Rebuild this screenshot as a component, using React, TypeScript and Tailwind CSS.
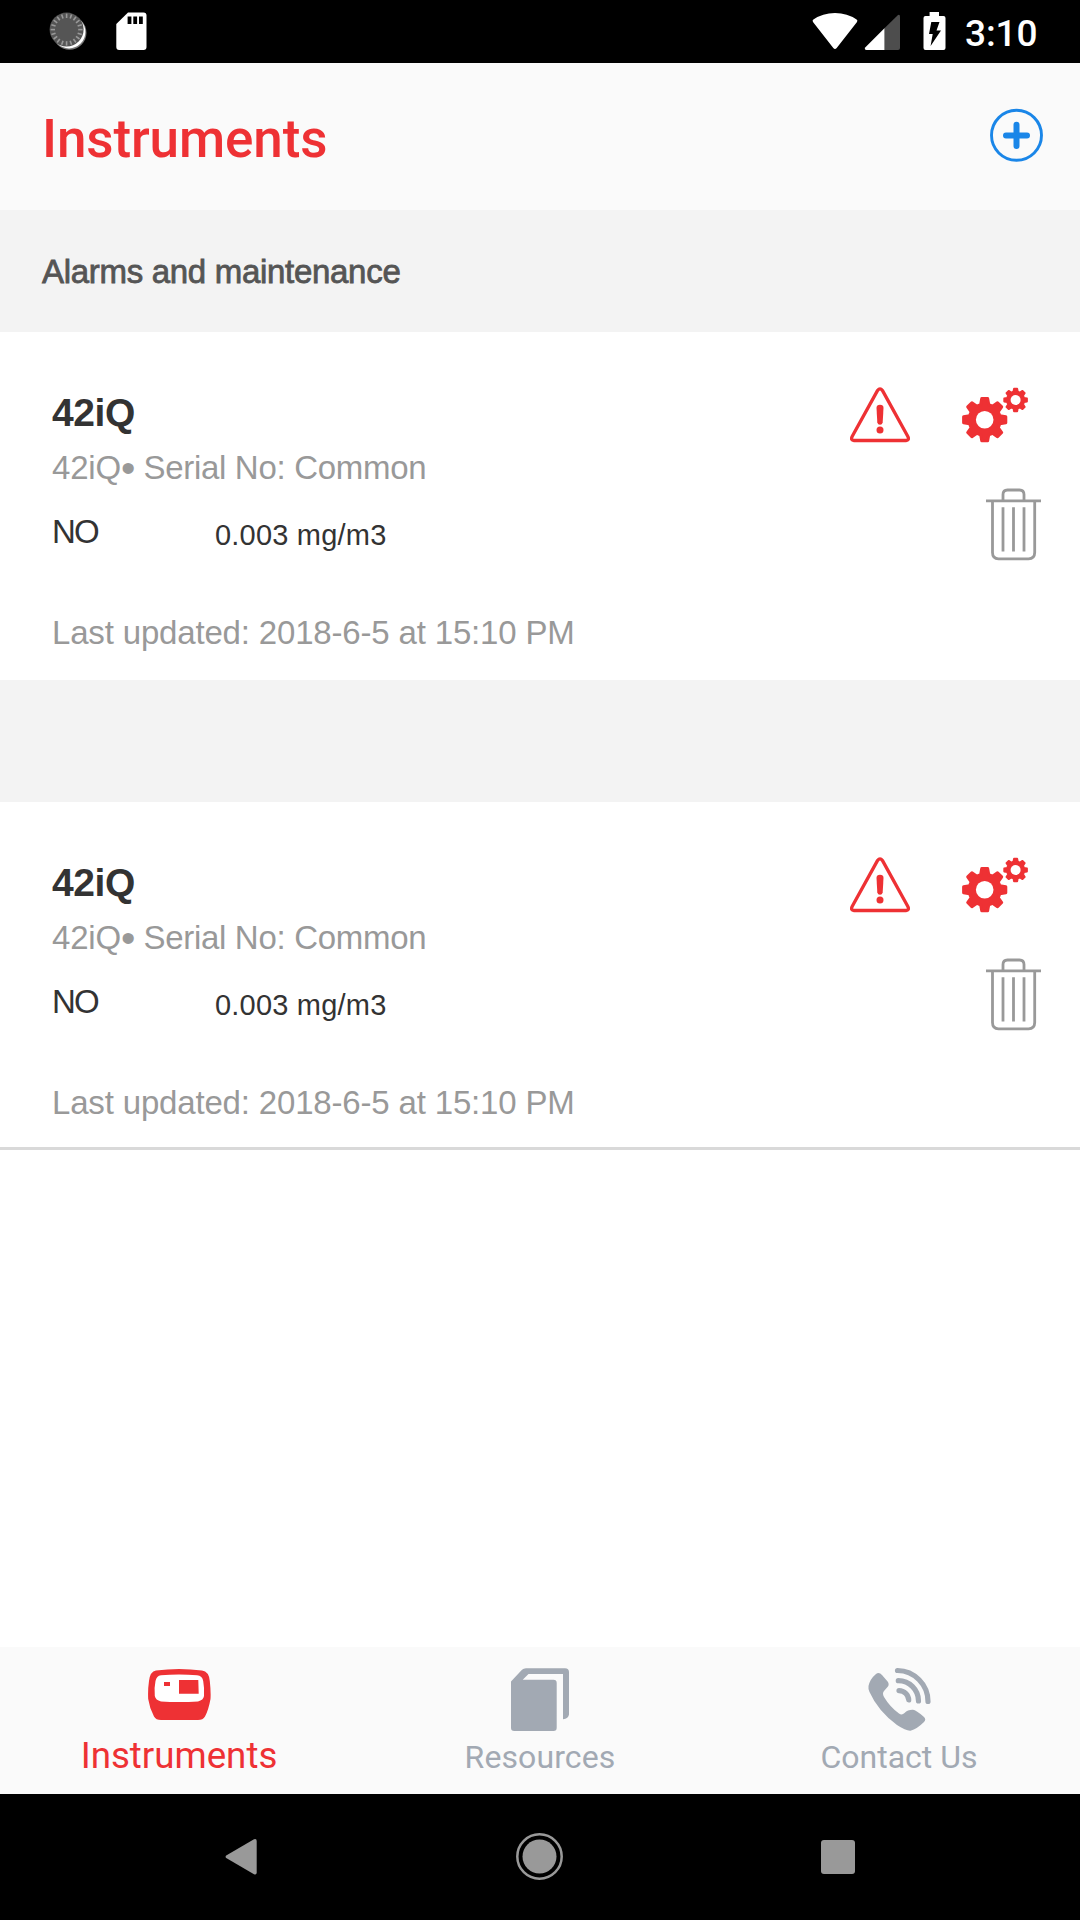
import React from "react";

function gearPath(cx: number, cy: number, outer: number, valley: number) {
  const pt = (r: number, deg: number) => {
    const a = (deg * Math.PI) / 180;
    return (cx + r * Math.cos(a)).toFixed(2) + " " + (cy + r * Math.sin(a)).toFixed(2);
  };
  let d = "";
  for (let k = 0; k < 8; k++) {
    const c = k * 45;
    d += (k === 0 ? "M" : "L") + pt(valley, c - 15) + "L" + pt(outer, c - 8);
    d += "L" + pt(outer, c + 8) + "L" + pt(valley, c + 15);
    d += "A" + valley + " " + valley + " 0 0 1 " + pt(valley, c + 30);
  }
  return d + "Z";
}

function WarningIcon() {
  return (
    <svg width="60" height="56" viewBox="0 0 60 56" fill="none">
      <path d="M27.6 3.4 Q30 .2 32.4 3.4 L58 49.8 Q59.4 53.2 56 53.5 H4 Q.6 53.2 2 49.8 Z" stroke="#ee3134" strokeWidth="3.3" strokeLinejoin="round" />
      <path d="M26.5 21 Q26.5 17.8 30 17.8 Q33.5 17.8 33.5 21 L32.7 35.5 Q32.2 37.8 30 37.8 Q27.8 37.8 27.3 35.5 Z" fill="#ee3134" />
      <circle cx="30" cy="43" r="3.5" fill="#ee3134" />
    </svg>
  );
}

function GearsIcon() {
  return (
    <svg width="68" height="56" viewBox="0 0 68 56">
      <path d={gearPath(23.7, 32.7, 21.3, 15.6)} fill="#ee3134" stroke="#ee3134" strokeWidth="3" strokeLinejoin="round" />
      <path d={gearPath(54.6, 13, 11.5, 8.6)} fill="#ee3134" stroke="#ee3134" strokeWidth="1.8" strokeLinejoin="round" />
      <circle cx="23.7" cy="32.7" r="8.8" fill="#fff" />
      <circle cx="54.6" cy="13" r="5" fill="#fff" />
    </svg>
  );
}

function TrashIcon() {
  return (
    <svg width="58" height="74" viewBox="0 0 58 74" fill="none" stroke="#999" strokeWidth="2.8">
      <path d="M1 12.8 H56" />
      <path d="M18 12.6 V6.6 Q18 2 22.5 2 H34.5 Q39 2 39 6.6 V12.6" />
      <path d="M7.5 12.6 V64.6 Q7.5 70.8 13.5 70.8 H43.5 Q49.7 70.8 49.7 64.6 V12.6" />
      <path d="M18 19.2 V63.6 M28.5 19.2 V63.6 M39 19.2 V63.6" />
    </svg>
  );
}

function StatusBar() {
  const ticks = Array.from({ length: 20 }, (_, i) => i * 18);
  return (
    <div className="flex h-[63px] items-start bg-black text-white">
      <svg className="ml-[48px] mt-[11px]" width="40" height="40" viewBox="0 0 40 40">
        <circle cx="21.5" cy="21.8" r="17" fill="#777" />
        <circle cx="21" cy="21" r="16.4" fill="#fff" />
        <circle cx="18.6" cy="18.6" r="17" fill="#555" />
        {ticks.map((t) => (
          <path key={t} d="M18.6 2.6 V7" stroke="#999" strokeWidth="1.6" transform={"rotate(" + t + " 18.6 18.6)"} />
        ))}
      </svg>
      <svg className="ml-[28px] mt-[12px]" width="31" height="39" viewBox="0 0 31 39">
        <path d="M12 .6 H27.5 Q30.5 .6 30.5 3.6 V35 Q30.5 38 27.5 38 H3.2 Q.3 38 .3 35 V12 Z" fill="#fff" />
        <path d="M11.6 4.4 h3.8 v7.6 h-3.8z M17.3 4.4 h3.8 v7.6 h-3.8z M23 4.4 h3.8 v7.6 h-3.8z" fill="#000" />
      </svg>
      <div className="flex-1" />
      <svg className="mt-[12px]" width="46" height="38" viewBox="0 0 46 38">
        <path d="M1 10 Q0 8.6 1.4 7.6 Q10.5 1 23 1 Q35.500 1 44.6 7.6 Q46 8.6 45 10 L24.7 36 Q23 38 21.3 36 Z" fill="#fff" />
      </svg>
      <svg className="ml-[6px] mt-[14px]" width="37" height="37" viewBox="0 0 37 37">
        <path d="M20.7 14 V36 H2.5 Q0 35.5 1.2 33.5 Z" fill="#fff" />
        <path d="M20.7 14 L34 1 Q36 0 36 2.5 V34 Q36 36 34 36 H20.7 Z" fill="#4d4d4d" />
      </svg>
      <svg className="ml-[22px] mt-[12px]" width="23" height="38" viewBox="0 0 23 38">
        <path d="M6.6 0 H16 V4 H20.5 Q22.5 4 22.5 6 V36 Q22.5 38 20.5 38 H2.5 Q.5 38 .5 36 V6 Q.5 4 2.5 4 H6.6 Z" fill="#fff" />
        <path d="M8.3 10 H16.5 L13.5 18.6 H18 L7.6 34 L9.7 22 H6 Z" fill="#000" />
      </svg>
      <span className="ml-[19px] w-[115px] mt-[13px] text-[37px] leading-[42px] font-medium tracking-[-0.1px]">3:10</span>
    </div>
  );
}

function InstrumentCard() {
  return (
    <article className="flex h-[348px] justify-between bg-white pl-[52px] font-['Liberation_Sans',Arial,sans-serif]">
      <div className="flex flex-col pt-[57px]">
        <h3 className="text-[39px] leading-[48px] font-bold tracking-[-0.4px] text-[#333]">42iQ</h3>
        <p className="mt-[11px] flex text-[33px] leading-[40px] text-[#999]">
          <span className="tracking-[-0.2px]">42iQ</span>
          <span className="text-[41px] tracking-[-0.7px]">•</span>
          <span className="tracking-[-0.3px] whitespace-pre"> Serial No: Common</span>
        </p>
        <div className="mt-[24px] flex h-[44px] text-[#333]">
          <span className="w-[163px] text-[33px] leading-[40px] tracking-[-1.8px]">NO</span>
          <span className="pt-[3px] text-[29px] leading-[40px] tracking-[0.2px]">0.003 mg/m3</span>
        </div>
        <p className="mt-[57px] text-[33px] leading-[40px] tracking-[-0.17px] text-[#999]">Last updated: 2018-6-5 at 15:10 PM</p>
      </div>
      <div className="flex flex-col items-end pt-[55px]">
        <div className="mr-[51px] flex gap-[51px]">
          <WarningIcon />
          <GearsIcon />
        </div>
        <div className="mt-[45px] mr-[37px]">
          <TrashIcon />
        </div>
      </div>
    </article>
  );
}

function TabBar() {
  return (
    <nav className="grid h-[147px] grid-cols-3 bg-[#fafafa] text-[#a2a9b3]">
      <div className="flex flex-col items-center pr-[2px] text-[#ee3134]">
        <svg className="mt-[21px] shrink-0" width="64" height="54" viewBox="0 0 64 54">
          <path d="M9 2.5 Q32 -.5 55 2.5 Q62 3.5 62.8 13 Q64 24 63.5 31 Q61.5 42 58 48.5 Q56 52 51 52 H14 Q9 52 7 48.5 Q2.5 40 1.2 31 Q.7 22 2 13 Q3 3.5 9 2.5 Z" fill="#ee3134" />
          <path d="M14 7.3 Q32 5.5 50 7.3 Q55.5 8 56.2 13 Q57.5 20 57 28 Q56.5 32 51 33.5 Q32 34.7 14 33.5 Q8.5 32 7.8 28 Q7 20 8.5 13 Q9.5 8 14 7.3 Z" fill="#fff" />
          <path d="M17 14 h6 v4 h-6z M32 12 h19.3 l.4 13.7 h-19.7z" fill="#ee3134" />
        </svg>
        <span className="mt-[13px] text-[36.7px] leading-[42px]">Instruments</span>
      </div>
      <div className="flex flex-col items-center">
        <svg className="mt-[20px] shrink-0" width="60" height="66" viewBox="0 0 60 66" fill="#a2a9b3">
          <path d="M1 16 L1 14.5 L12 2.8 Q13.5 1.2 16 1.2 H55 Q59 1.2 59 5 V47.5 Q58.5 51.5 53 52.3 V7 H18.5 L12.7 12.7 H43.5 Q46.7 12.7 46.7 16 V60.7 Q46.7 64 43.5 64 H4.2 Q1 64 1 60.7 Z" />
        </svg>
        <span className="mt-[5px] text-[32px] leading-[38px] tracking-[0.1px]">Resources</span>
      </div>
      <div className="flex flex-col items-center pr-[2px]">
        <svg className="mt-[20px] shrink-0" width="64" height="66" viewBox="0 0 64 66">
          <path d="M9 7 Q12 4.5 15 8 L21 15 Q22.5 18 20.5 20 L17 24 Q15 26.5 17 30 Q23 40 32 46.5 Q35 48.5 37.5 46 Q41 42.5 46 42.8 Q49 43 57 50 Q59.5 52.5 57 55 Q50 62 43.5 63.7 Q39 64 30 58 Q11 44 2.5 25 Q1 21 1.5 19 Q3 12 9 7 Z" fill="#a2a9b3" />
          <g fill="none" stroke="#a2a9b3" strokeWidth="5.2" strokeLinecap="round">
            <path d="M30.5 3.5 A31 31 0 0 1 61 34.5" />
            <path d="M31.3 13.7 A20.3 20.3 0 0 1 51.5 34" />
            <path d="M32 23.6 A9.8 9.8 0 0 1 41.7 33" />
          </g>
        </svg>
        <span className="mt-[5px] text-[32px] leading-[38px]">Contact Us</span>
      </div>
    </nav>
  );
}

function SystemNav() {
  return (
    <div className="flex h-[126px] items-center justify-between bg-black pl-[225px] pr-[225px]">
      <svg width="34" height="38" viewBox="0 0 34 38">
        <path d="M1.2 17.5 L29 1.3 Q31.7 .5 31.7 3 V34.5 Q31.7 37.3 29 36.3 L1.2 20 Q0 18.7 1.2 17.5 Z" fill="#999" />
      </svg>
      <svg width="48" height="48" viewBox="0 0 48 48">
        <circle cx="23.5" cy="23.5" r="22.2" fill="none" stroke="#999" strokeWidth="2.5" />
        <circle cx="23.5" cy="23.5" r="17" fill="#999" />
      </svg>
      <div className="h-[34px] w-[34px] rounded-[3px] bg-[#999]" />
    </div>
  );
}

export default function App() {
  return (
    <div className="flex h-[1920px] w-[1080px] flex-col bg-white font-[Roboto,sans-serif]">
      <StatusBar />
      <header className="flex h-[147px] items-start justify-between bg-[#fafafa] pl-[42px] pr-[36px]">
        <h1 className="mt-[44px] text-[53px] leading-[64px] font-medium tracking-[-0.12px] text-[#ee3134]">Instruments</h1>
        <svg className="mt-[45px]" width="55" height="55" viewBox="0 0 55 55" fill="none" stroke="#1a86e8">
          <circle cx="27.5" cy="27.3" r="25" strokeWidth="2.9" />
          <path d="M27.5 16.8 V38 M17 27.4 H38" strokeWidth="6" strokeLinecap="round" />
        </svg>
      </header>
      <h2 className="h-[122px] bg-[#f3f3f3] pt-[42px] pl-[42px] font-['Liberation_Sans',Arial,sans-serif] text-[33px] leading-[40px] tracking-[-0.3px] text-[#555] [-webkit-text-stroke:0.8px_#555]">
        Alarms and maintenance
      </h2>
      <InstrumentCard />
      <div className="h-[122px] bg-[#f3f3f3]" />
      <InstrumentCard />
      <div className="-mt-[3px] h-[3px] bg-[#d9d9d9]" />
      <main className="flex-1 bg-white" />
      <TabBar />
      <SystemNav />
    </div>
  );
}
